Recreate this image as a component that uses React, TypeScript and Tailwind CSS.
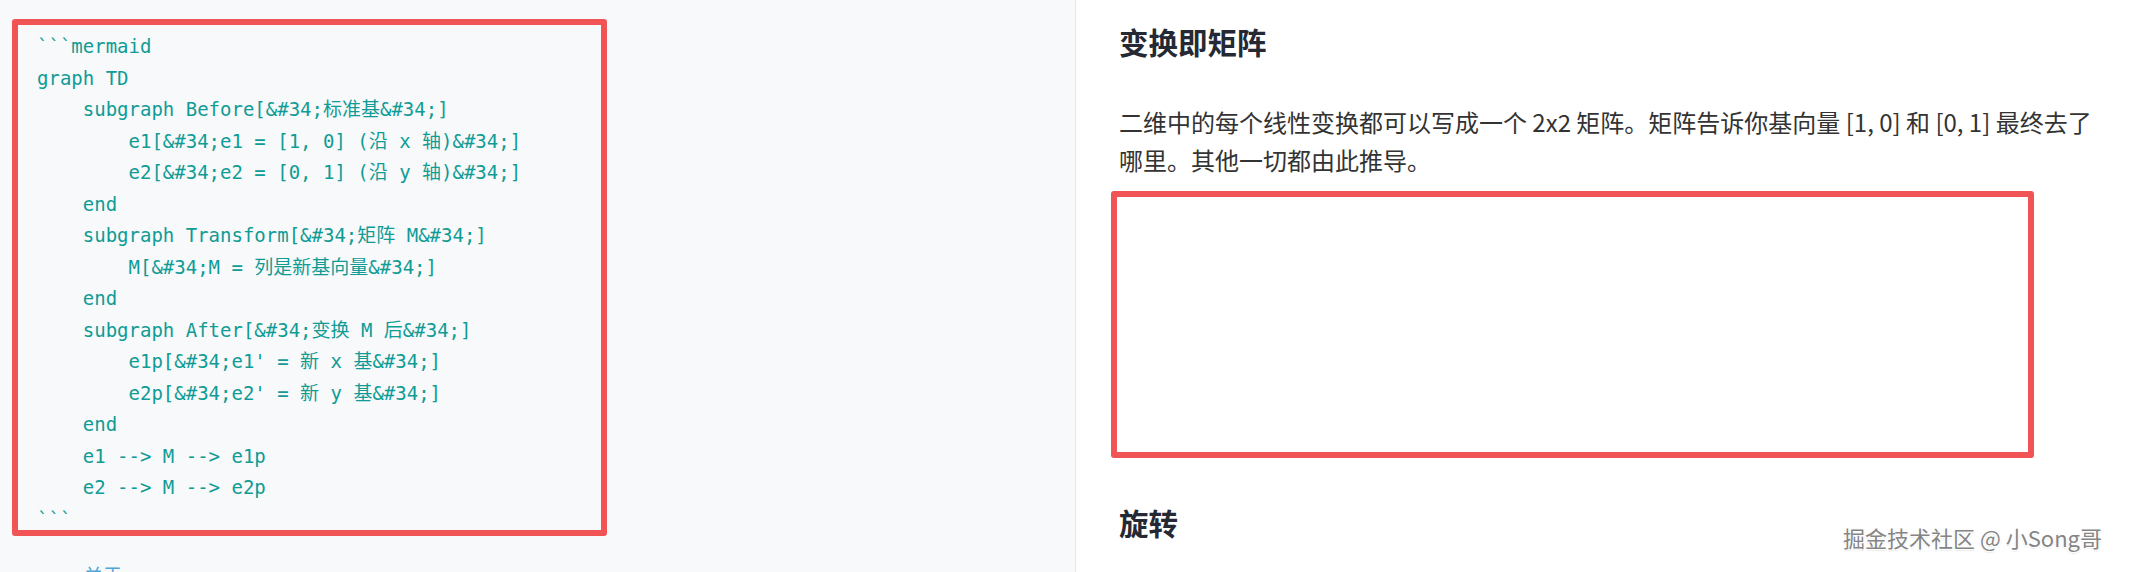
import React from "react";

const codeLines: string[] = [
  "```mermaid",
  "graph TD",
  "    subgraph Before[&#34;标准基&#34;]",
  "        e1[&#34;e1 = [1, 0] (沿 x 轴)&#34;]",
  "        e2[&#34;e2 = [0, 1] (沿 y 轴)&#34;]",
  "    end",
  "    subgraph Transform[&#34;矩阵 M&#34;]",
  "        M[&#34;M = 列是新基向量&#34;]",
  "    end",
  "    subgraph After[&#34;变换 M 后&#34;]",
  "        e1p[&#34;e1' = 新 x 基&#34;]",
  "        e2p[&#34;e2' = 新 y 基&#34;]",
  "    end",
  "    e1 --> M --> e1p",
  "    e2 --> M --> e2p",
  "```",
];

export default function App() {
  return (
    <div className="relative flex h-[572px] w-[2154px] overflow-hidden bg-white">
      {/* Left: code panel */}
      <div className="flex h-full w-[1076px] shrink-0 flex-col border-r border-[#e6e7ea] bg-[#f8f9fb] pl-[12px] pt-[19px]">
        <div className="h-[517px] w-[595px] shrink-0 overflow-hidden rounded-[3px] border-[6px] border-[#f05454] pl-[19px] pt-[6px]">
          <pre className="m-0 whitespace-pre font-['DejaVu_Sans_Mono','Noto_Sans_CJK_SC',monospace] text-[19px] leading-[31.5px] text-[#0f9c95]">
            {codeLines.join("\n")}
          </pre>
        </div>
        <div className="mt-[23px] pl-[72px] font-['Noto_Sans_CJK_SC',sans-serif] text-[19px] leading-[31.5px] text-[#4fa6d6]">
          关于
        </div>
      </div>

      {/* Right: article panel */}
      <div className="flex flex-1 flex-col pl-[35px] font-['Noto_Sans_CJK_SC','Noto_Sans',sans-serif]">
        <h2 className="mt-[19px] pl-[8px] text-[29.5px] font-bold leading-[44px] text-[#252933]">
          变换即矩阵
        </h2>
        <p className="mt-[40px] pl-[8px] text-[24px] leading-[38px] text-[#333333]">
          二维中的每个线性变换都可以写成一个 2x2 矩阵。矩阵告诉你基向量 [1, 0] 和 [0, 1] 最终去了
          <br />
          哪里。其他一切都由此推导。
        </p>
        <div className="mt-[12px] h-[267px] w-[923px] shrink-0 rounded-[3px] border-[6px] border-[#f05454] bg-white" />
        <h3 className="mt-[42px] pl-[8px] text-[29.5px] font-bold leading-[44px] text-[#252933]">
          旋转
        </h3>
      </div>

      {/* Watermark */}
      <div className="absolute bottom-[20px] right-[52px] font-['Noto_Sans_CJK_SC',sans-serif] text-[22px] leading-[30px] text-[#858585] [text-shadow:1px_1px_0_rgba(255,255,255,0.95),-1px_-1px_0_rgba(255,255,255,0.95),1px_-1px_0_rgba(255,255,255,0.95),-1px_1px_0_rgba(255,255,255,0.95),0_1px_2px_rgba(0,0,0,0.25)]">
        掘金技术社区 @ 小Song哥
      </div>
    </div>
  );
}
